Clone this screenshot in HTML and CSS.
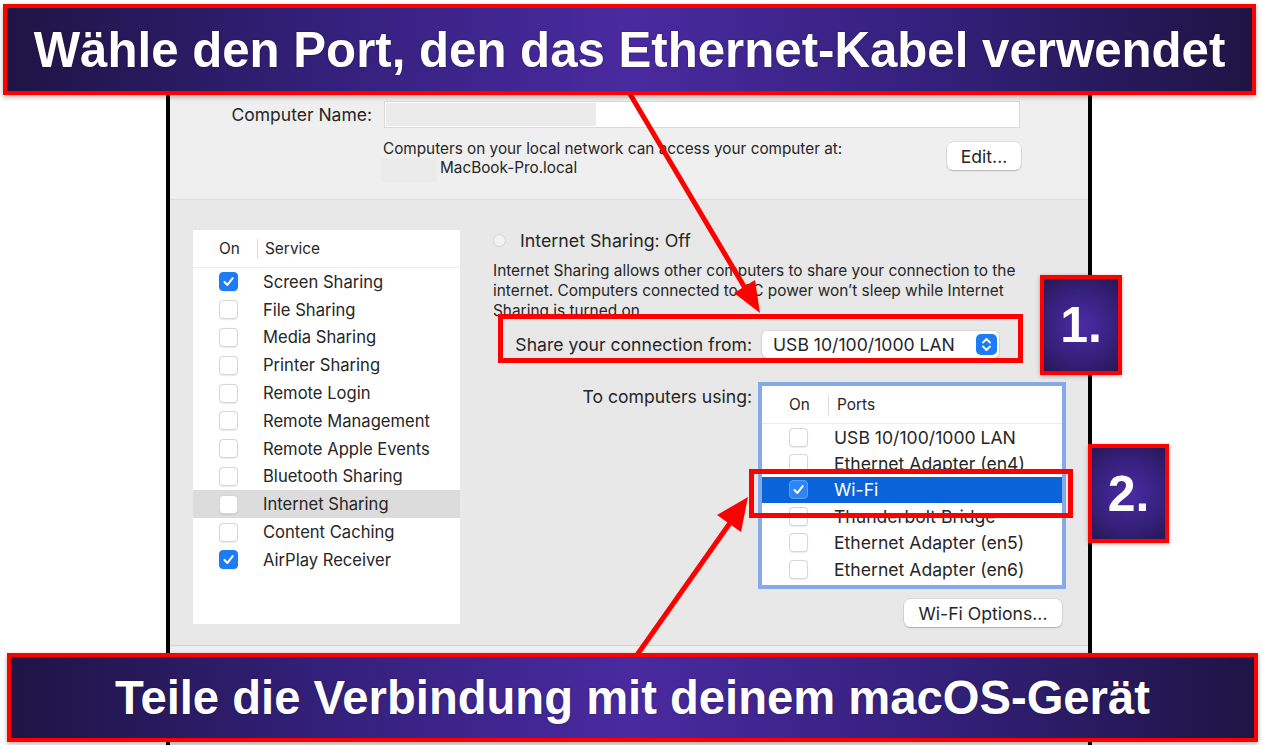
FILE: index.html
```html
<!DOCTYPE html>
<html lang="de">
<head>
    <meta charset="UTF-8">
    <meta name="viewport" content="width=device-width, initial-scale=1.0">
    <title>Internet-Freigabe unter macOS</title>
    <link rel="stylesheet" href="styles.css">
</head>
<body>
    <div class="stage">
        <div class="window">
            <section class="name-pane">
                <div class="name-row">
                    <span class="name-label">Computer Name:</span>
                    <div class="text-field"><span class="redacted"></span></div>
                </div>
                <div class="host-row">
                    <p class="host-text">Computers on your local network can access your computer at:<br><span class="redacted small"></span>MacBook-Pro.local</p>
                    <button class="mac-button edit">Edit...</button>
                </div>
            </section>

            <section class="sharing-pane">
                <div class="service-list">
                    <div class="list-head">
                        <span class="col-on">On</span>
                        <span class="col-name">Service</span>
                    </div>
                    <div class="list-row"><span class="check on"><svg viewBox="0 0 19 19"><path d="M5 10 L8.3 13.3 L14.2 5.8"/></svg></span>Screen Sharing</div>
                    <div class="list-row"><span class="check"></span>File Sharing</div>
                    <div class="list-row"><span class="check"></span>Media Sharing</div>
                    <div class="list-row"><span class="check"></span>Printer Sharing</div>
                    <div class="list-row"><span class="check"></span>Remote Login</div>
                    <div class="list-row"><span class="check"></span>Remote Management</div>
                    <div class="list-row"><span class="check"></span>Remote Apple Events</div>
                    <div class="list-row"><span class="check"></span>Bluetooth Sharing</div>
                    <div class="list-row selected"><span class="check"></span>Internet Sharing</div>
                    <div class="list-row"><span class="check"></span>Content Caching</div>
                    <div class="list-row"><span class="check on"><svg viewBox="0 0 19 19"><path d="M5 10 L8.3 13.3 L14.2 5.8"/></svg></span>AirPlay Receiver</div>
                </div>

                <div class="detail">
                    <div class="status"><span class="radio"></span>Internet Sharing: Off</div>
                    <p class="desc">Internet Sharing allows other computers to share your connection to the<br>internet. Computers connected to AC power won’t sleep while Internet<br>Sharing is turned on.</p>

                    <div class="form-grid">
                        <span class="form-label">Share your connection from:</span>
                        <div class="popup">
                            <span>USB 10/100/1000 LAN</span>
                            <span class="stepper"><svg viewBox="0 0 21 21"><path d="M7 8.5 L10.5 5 L14 8.5 M7 12.5 L10.5 16 L14 12.5"/></svg></span>
                        </div>

                        <span class="form-label top">To computers using:</span>
                        <div class="ports">
                            <div class="ports-head">
                                <span class="col-on">On</span>
                                <span class="col-name">Ports</span>
                            </div>
                            <div class="port-row"><span class="check"></span>USB 10/100/1000 LAN</div>
                            <div class="port-row"><span class="check"></span>Ethernet Adapter (en4)</div>
                            <div class="port-row selected"><span class="check on"><svg viewBox="0 0 19 19"><path d="M5 10 L8.3 13.3 L14.2 5.8"/></svg></span>Wi-Fi</div>
                            <div class="port-row"><span class="check"></span>Thunderbolt Bridge</div>
                            <div class="port-row"><span class="check"></span>Ethernet Adapter (en5)</div>
                            <div class="port-row"><span class="check"></span>Ethernet Adapter (en6)</div>
                        </div>

                        <button class="mac-button wifi-options">Wi-Fi Options...</button>
                    </div>
                </div>
            </section>

            <div class="window-foot"></div>
        </div>

        <!-- annotations on top of the screenshot -->
        <div class="mark mark-share"></div>
        <div class="mark mark-wifi"></div>

        <svg class="arrows" viewBox="0 0 1262 745">
            <line x1="630" y1="94" x2="745" y2="288"/>
            <polygon points="760,313 734,293 755,280"/>
            <line x1="637" y1="655" x2="730" y2="523"/>
            <polygon points="748,497 741,532 717,515"/>
        </svg>

        <div class="callout callout-one">1.</div>
        <div class="callout callout-two">2.</div>

        <div class="banner banner-top">Wähle den Port, den das Ethernet-Kabel verwendet</div>
        <div class="banner banner-bottom">Teile die Verbindung mit deinem macOS-Gerät</div>
    </div>
</body>
</html>
```

FILE: styles.css
```css
* {
    box-sizing: border-box;
}

html, body {
    margin: 0;
    padding: 0;
    width: 1262px;
    height: 745px;
    overflow: hidden;
    background-color: #ffffff;
    font-family: 'Inter', 'Noto Sans', sans-serif;
    color: #262626;
}

.stage {
    position: relative;
    width: 1262px;
    height: 745px;
    padding-top: 94px;
}

/* macOS window */
.window {
    margin-left: 166px;
    width: 926px;
    height: 651px;
    border-left: 4px solid #000;
    border-right: 4px solid #000;
    background: #e8e8e8;
    display: flex;
    flex-direction: column;
}

.name-pane {
    height: 106px;
    background: #efefef;
    border-bottom: 1px solid #dedede;
    padding-top: 7px;
}

.name-row {
    display: flex;
    align-items: center;
}

.name-label {
    width: 202px;
    margin-right: 12px;
    text-align: right;
    font-size: 17.5px;
}

.text-field {
    width: 636px;
    height: 27px;
    background: #ffffff;
    border: 1px solid #d9d9d9;
    padding: 1px;
}

.redacted {
    display: block;
    width: 210px;
    height: 23px;
    background: #ebebeb;
}

.redacted.small {
    display: inline-block;
    width: 56px;
    height: 24px;
    margin: -3px 3px -2px -2px;
    vertical-align: -7px;
}

.host-row {
    display: flex;
    align-items: flex-start;
    margin-top: 11px;
    padding-left: 213px;
    padding-right: 67px;
}

.host-text {
    margin: 0;
    font-size: 15.3px;
    line-height: 19px;
}

.mac-button {
    font-family: inherit;
    font-size: 17.6px;
    color: #262626;
    background: #ffffff;
    border: none;
    border-radius: 6px;
    box-shadow: 0 0 0 0.5px rgba(0, 0, 0, 0.12), 0 1px 1.5px rgba(0, 0, 0, 0.2);
    padding: 0;
}

.mac-button.edit {
    margin-left: auto;
    margin-top: 3px;
    width: 74px;
    height: 28px;
}

.sharing-pane {
    height: 445px;
    display: flex;
    padding: 30px 0 0 23px;
}

/* service table */
.service-list {
    width: 267px;
    height: 394px;
    background: #ffffff;
    font-size: 16.6px;
}

.list-head,
.ports-head {
    height: 38px;
    display: flex;
    align-items: center;
    border-bottom: 1px solid #ececec;
    font-size: 15.4px;
}

.list-head .col-on {
    width: 65px;
    padding-left: 26px;
    border-right: 1px solid #dcdcdc;
    line-height: 20px;
}

.list-head .col-name {
    padding-left: 7px;
}

.list-row {
    height: 27.8px;
    display: flex;
    align-items: center;
    padding-left: 26px;
}

.list-row.selected {
    background: #dcdcdc;
}

.check {
    width: 19px;
    height: 19px;
    flex-shrink: 0;
    margin-right: 25px;
    border-radius: 4px;
    background: #ffffff;
    border: 1px solid #d6d6d6;
    box-shadow: 0 0.5px 1px rgba(0, 0, 0, 0.08);
}

.check.on {
    background: #1b7cf6;
    border-color: #1b7cf6;
}

.check svg {
    display: block;
    width: 17px;
    height: 17px;
}

.check svg path {
    fill: none;
    stroke: #ffffff;
    stroke-width: 2.3;
    stroke-linecap: round;
    stroke-linejoin: round;
}

/* right side */
.detail {
    margin-left: 33px;
    width: 573px;
}

.status {
    height: 20px;
    display: flex;
    align-items: center;
    font-size: 17.8px;
}

.radio {
    width: 13px;
    height: 13px;
    border-radius: 50%;
    background: #f2f2f2;
    border: 1px solid #d4d4d4;
    margin-right: 14px;
}

.desc {
    margin: 11px 0 0;
    font-size: 15.4px;
    line-height: 20px;
    white-space: nowrap;
}

.form-grid {
    margin-top: 10px;
    display: grid;
    grid-template-columns: 259px 300px;
    column-gap: 10px;
    font-size: 17.6px;
}

.form-label {
    text-align: right;
    align-self: center;
    white-space: nowrap;
}

.form-label.top {
    align-self: start;
    margin-top: 28px;
    line-height: 22px;
}

.popup {
    width: 237px;
    height: 27px;
    display: flex;
    align-items: center;
    padding: 0 2px 0 11px;
    background: #ffffff;
    border-radius: 5px;
    box-shadow: 0 0 0 0.5px rgba(0, 0, 0, 0.12), 0 1px 1.5px rgba(0, 0, 0, 0.2);
}

.stepper {
    margin-left: auto;
    width: 21px;
    height: 21px;
    border-radius: 5px;
    background: #1b7cf6;
}

.stepper svg {
    display: block;
    width: 21px;
    height: 21px;
}

.stepper svg path {
    fill: none;
    stroke: #ffffff;
    stroke-width: 1.8;
    stroke-linecap: round;
    stroke-linejoin: round;
}

.ports {
    margin-top: 28px;
    width: 300px;
    height: 199px;
    background: #ffffff;
    box-shadow: 0 0 0 4px #86a9ea;
}

.ports-head .col-on {
    width: 67px;
    padding-left: 27px;
    border-right: 1px solid #dcdcdc;
    line-height: 20px;
}

.ports-head .col-name {
    padding-left: 8px;
}

.port-row {
    height: 26.4px;
    display: flex;
    align-items: center;
    padding-left: 27px;
    white-space: nowrap;
}

.port-row .check {
    margin-right: 26px;
}

.port-row.selected {
    background: #0a63d8;
    color: #ffffff;
}

.port-row.selected .check.on {
    background: #2d86f7;
    border-color: #5aa0f8;
}

.mac-button.wifi-options {
    grid-column: 2;
    justify-self: end;
    margin-top: 14px;
    width: 158px;
    height: 28px;
}

.window-foot {
    flex: 1;
    background: #efefef;
    border-top: 1px solid #d0d0d0;
}

/* annotations */
.mark {
    position: absolute;
    border: 5px solid #ff0000;
}

.mark-share {
    left: 498px;
    top: 314px;
    width: 525px;
    height: 49px;
}

.mark-wifi {
    left: 749px;
    top: 469px;
    width: 324px;
    height: 49px;
}

.arrows {
    position: absolute;
    left: 0;
    top: 0;
    width: 1262px;
    height: 745px;
}

.arrows line {
    stroke: #ff0000;
    stroke-width: 5;
}

.arrows polygon {
    fill: #ff0000;
}

.callout {
    position: absolute;
    display: flex;
    align-items: center;
    justify-content: center;
    border: 4px solid #ff0000;
    background: radial-gradient(circle, #4c2ba6 0%, #35207a 60%, #261755 100%);
    color: #ffffff;
    font-family: 'Liberation Sans', Arial, sans-serif;
    font-weight: 700;
    font-size: 50px;
    box-shadow: 0 1px 4px rgba(0, 0, 0, 0.3);
}

.callout-one {
    left: 1040px;
    top: 275px;
    width: 82px;
    height: 100px;
}

.callout-two {
    left: 1088px;
    top: 444px;
    width: 81px;
    height: 99px;
}

.banner {
    position: absolute;
    display: flex;
    align-items: center;
    justify-content: center;
    border: 4px solid #ff0000;
    background: linear-gradient(to right, #1f1444 0%, #33207a 25%, #4a2aa0 50%, #33207a 75%, #1f1444 100%);
    color: #ffffff;
    font-family: 'Liberation Sans', Arial, sans-serif;
    font-weight: 700;
    white-space: nowrap;
    box-shadow: 0 2px 5px rgba(0, 0, 0, 0.3);
    text-shadow: 0 0 2px rgba(0, 0, 0, 0.4);
}

.banner-top {
    left: 3px;
    top: 4px;
    width: 1253px;
    height: 91px;
    font-size: 49.2px;
}

.banner-bottom {
    left: 7px;
    top: 653px;
    width: 1251px;
    height: 89px;
    font-size: 47.2px;
}
```
